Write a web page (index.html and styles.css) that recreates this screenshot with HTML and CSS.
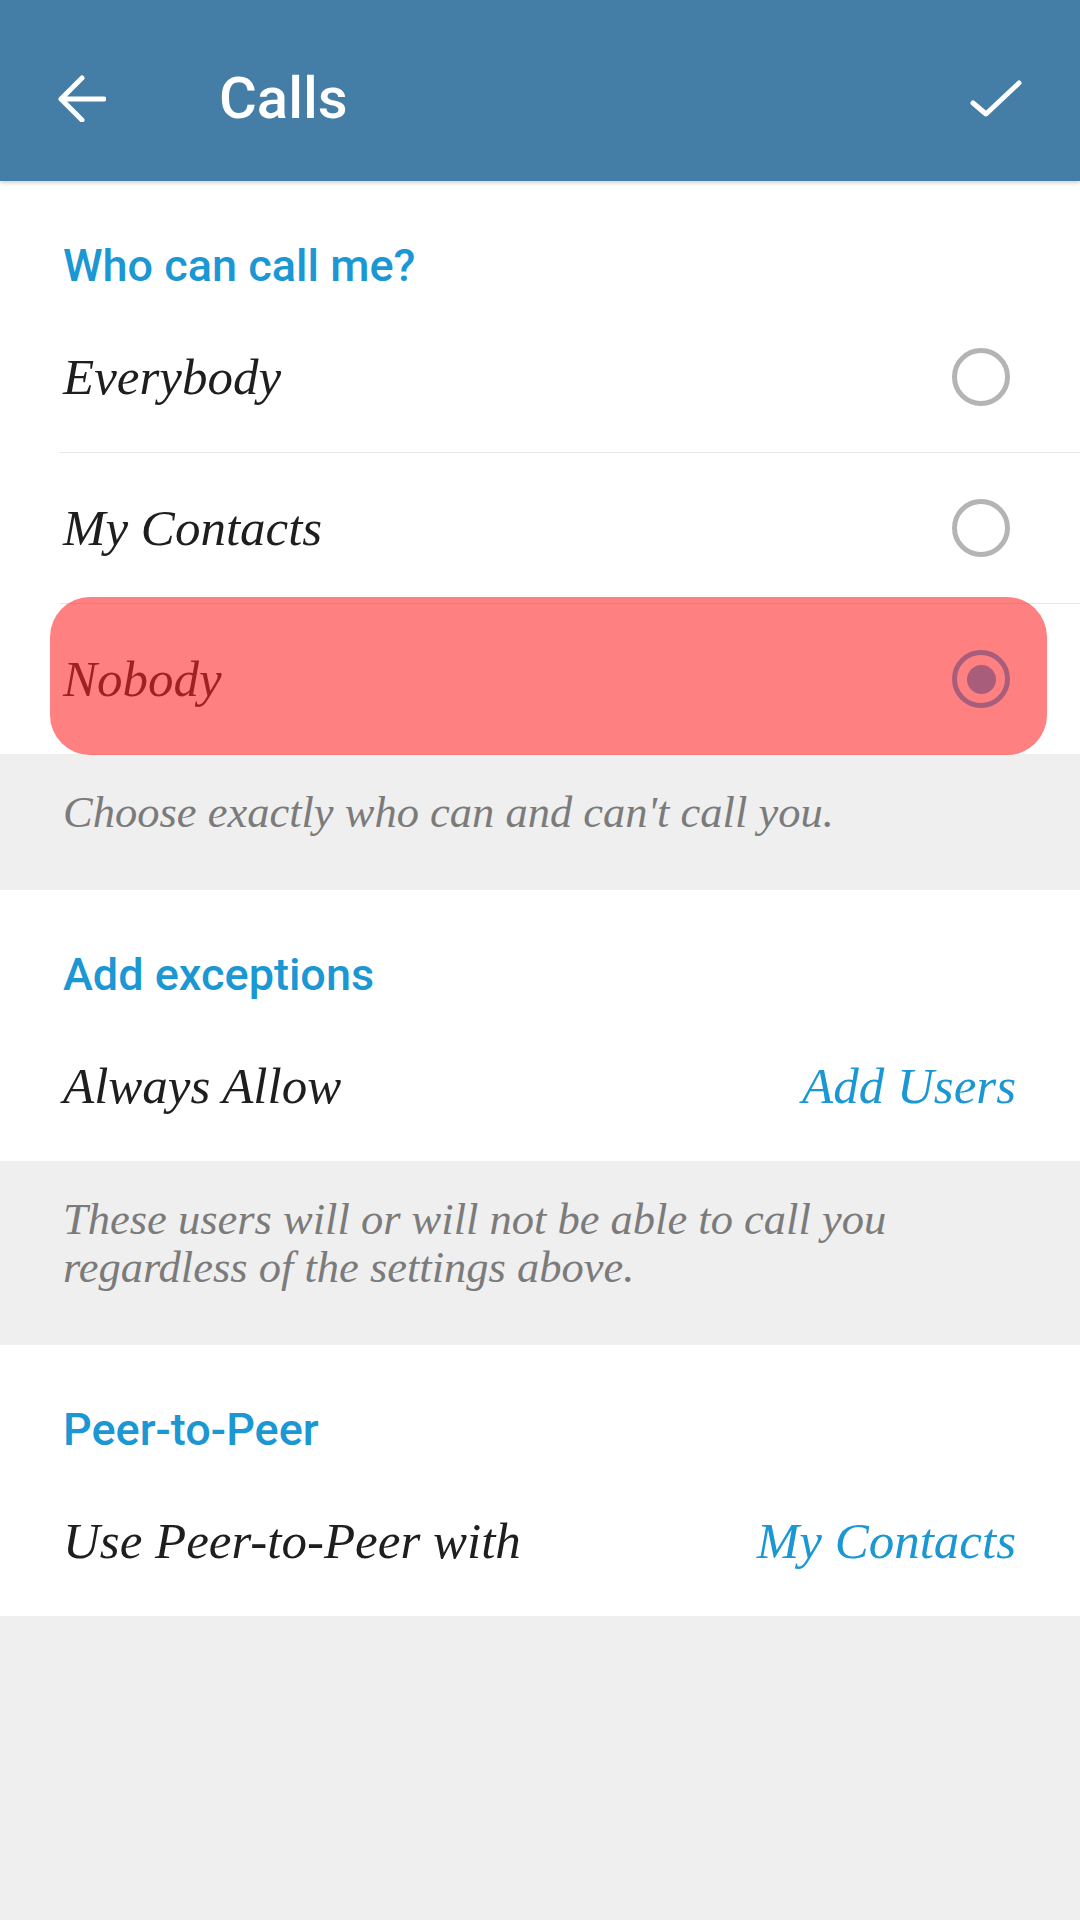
FILE: index.html
```html
<!DOCTYPE html>
<html lang="en">
<head>
  <meta charset="UTF-8">
  <meta name="viewport" content="width=device-width, initial-scale=1.0">
  <title>Calls</title>
  <link rel="stylesheet" href="styles.css">
</head>
<body>
  <header class="topbar">
    <svg class="back-icon" width="48" height="48" viewBox="0 0 48 48">
      <path d="M3 25 H46 M24 4 L3 25 L24 46" fill="none" stroke="#fff" stroke-width="5" stroke-linecap="round" stroke-linejoin="round"/>
    </svg>
    <h1 class="topbar-title">Calls</h1>
    <svg class="done-icon" width="56" height="56" viewBox="0 0 56 56">
      <path d="M5 33 L18 44 L51 13" fill="none" stroke="#fff" stroke-width="5" stroke-linecap="round" stroke-linejoin="round"/>
    </svg>
  </header>

  <main>
    <section class="group">
      <h2 class="group-title">Who can call me?</h2>
      <div class="row">
        <span class="row-label">Everybody</span>
        <span class="radio"></span>
      </div>
      <div class="row">
        <span class="row-label">My Contacts</span>
        <span class="radio"></span>
      </div>
      <div class="row">
        <span class="row-label">Nobody</span>
        <span class="radio checked"></span>
        <!-- highlight marker drawn over the selected option -->
        <div class="highlight"></div>
      </div>
    </section>
    <p class="hint">Choose exactly who can and can't call you.</p>

    <section class="group">
      <h2 class="group-title">Add exceptions</h2>
      <div class="row">
        <span class="row-label">Always Allow</span>
        <span class="row-value">Add Users</span>
      </div>
    </section>
    <p class="hint">These users will or will not be able to call you regardless of the settings above.</p>

    <section class="group">
      <h2 class="group-title">Peer-to-Peer</h2>
      <div class="row">
        <span class="row-label">Use Peer-to-Peer with</span>
        <span class="row-value">My Contacts</span>
      </div>
    </section>
  </main>
</body>
</html>
```

FILE: styles.css
```css
* {
  margin: 0;
  padding: 0;
  box-sizing: border-box;
}

body {
  background-color: #efefef;
  min-height: 1920px;
}

.topbar {
  display: flex;
  align-items: center;
  height: 181px;
  padding-top: 14px;
  background-color: #447ea6;
  box-shadow: 0 2px 4px rgba(0, 0, 0, 0.18);
  position: relative;
  z-index: 1;
}

.back-icon {
  margin-left: 58px;
  flex-shrink: 0;
}

.topbar-title {
  margin-left: 113px;
  font-family: Roboto, "Noto Sans", sans-serif;
  font-weight: 500;
  font-size: 58px;
  line-height: 1;
  color: #fff;
  flex: 1;
}

.done-icon {
  margin-right: 56px;
  flex-shrink: 0;
}

.group {
  background-color: #fff;
}

.group-title {
  height: 121px;
  padding: 60px 63px 0;
  font-family: Roboto, "Noto Sans", sans-serif;
  font-weight: 500;
  font-size: 45px;
  line-height: 50px;
  color: #1b97d4;
}

.row {
  position: relative;
  display: flex;
  align-items: center;
  justify-content: space-between;
  height: 150px;
  margin-left: 60px;
  padding: 0 64px 0 3px;
  font-family: "Liberation Serif", "Times New Roman", serif;
  font-style: italic;
  font-size: 51px;
}

.row + .row {
  height: 151px;
  border-top: 1px solid #e6e6e6;
}

.row-label {
  color: #1e1e1e;
}

.row-value {
  color: #1b97d4;
}

.radio {
  width: 58px;
  height: 58px;
  margin-right: 6px;
  border: 5px solid #b4b4b4;
  border-radius: 50%;
  display: flex;
  align-items: center;
  justify-content: center;
}

.radio.checked {
  border-color: #30aef4;
}

.radio.checked::after {
  content: "";
  width: 29px;
  height: 29px;
  border-radius: 50%;
  background-color: #30aef4;
}

.highlight {
  position: absolute;
  top: -7px;
  bottom: -1px;
  left: -10px;
  right: 33px;
  border-radius: 40px;
  background-color: rgba(255, 36, 36, 0.58);
  pointer-events: none;
}

.hint {
  padding: 34px 64px 54px 63px;
  font-family: "Liberation Serif", "Times New Roman", serif;
  font-style: italic;
  font-size: 44.5px;
  line-height: 48px;
  color: #7b7b7b;
}
```
